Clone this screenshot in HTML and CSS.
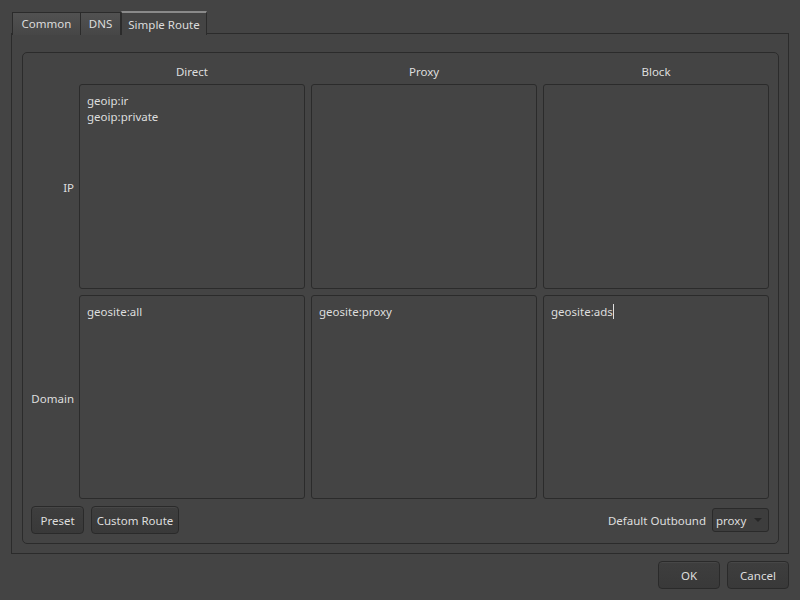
FILE: index.html
```html
<!DOCTYPE html>
<html>
<head>
<meta charset="utf-8">
<link rel="stylesheet" href="styles.css">
</head>
<body>
<div class="dialog">
  <div class="tabbar">
    <div class="tab tab-common">Common</div>
    <div class="tab tab-dns">DNS</div>
    <div class="tab active tab-route">Simple Route</div>
  </div>
  <div class="pane">
    <div class="group">
      <div class="grid">
        <div></div>
        <div class="head">Direct</div>
        <div class="head">Proxy</div>
        <div class="head">Block</div>

        <div class="rowlabel">IP</div>
        <div class="edit">geoip:ir<br>geoip:private</div>
        <div class="edit"></div>
        <div class="edit"></div>

        <div class="rowlabel">Domain</div>
        <div class="edit">geosite:all</div>
        <div class="edit">geosite:proxy</div>
        <div class="edit">geosite:ads<span class="caret"></span></div>

        <div class="actions">
          <button class="btn btn-preset">Preset</button>
          <button class="btn btn-custom">Custom Route</button>
          <div class="spacer"></div>
          <span class="outlabel">Default Outbound</span>
          <div class="combo"><span>proxy</span><span class="arrow"></span></div>
        </div>
      </div>
    </div>
  </div>
  <div class="footer">
    <button class="btn dlg">OK</button>
    <button class="btn dlg">Cancel</button>
  </div>
</div>
</body>
</html>
```

FILE: styles.css
```css
html, body {
  margin: 0;
  padding: 0;
  background: #444444;
  width: 800px;
  height: 600px;
  overflow: hidden;
}
body {
  font-family: "Noto Sans", "DejaVu Sans", sans-serif;
  font-size: 11.5px;
  color: #dedede;
}
.dialog {
  padding: 11px 11px 0 11px;
  display: flex;
  flex-direction: column;
}
.tabbar {
  display: flex;
  padding-left: 1px;
  height: 23px;
  position: relative;
  z-index: 1;
}
.tab {
  box-sizing: border-box;
  height: 23px;
  margin-top: 1px;
  line-height: 21px;
  text-align: center;
  border: 1px solid #2b2b2b;
  border-bottom: none;
  background: linear-gradient(#515151, #464646);
  color: #dcdcdc;
  margin-right: -1px;
}
.tab-common { width: 69px; }
.tab-dns { width: 41px; }
.tab-route { width: 86px; }
.active {
  margin-top: 0;
  height: 24px;
  line-height: 24px;
  background: #444444;
  border-top: 2px solid #8a8a8a;
  margin-left: 1px;
}
.pane {
  box-sizing: border-box;
  height: 521px;
  border: 1px solid #2b2b2b;
  margin-top: -1px;
  padding: 18px 9px 9px 10px;
}
.group {
  box-sizing: border-box;
  height: 492px;
  border: 1px solid #2b2b2b;
  border-radius: 5px;
  padding: 11px 9px 9px 8px;
}
.grid {
  display: grid;
  grid-template-columns: 42px 1fr 1fr 1fr;
  grid-template-rows: 14px 205px 204px 29px;
  column-gap: 6px;
  row-gap: 6px;
}
.head {
  text-align: center;
  line-height: 14px;
  position: relative;
  top: 1px;
}
.rowlabel {
  align-self: center;
  text-align: right;
  margin-right: -1px;
  padding-top: 2px;
}
.edit {
  box-sizing: border-box;
  border: 1px solid #2b2b2b;
  border-radius: 3px;
  background: #444444;
  padding: 8px 7px;
  line-height: 16px;
}
.caret {
  display: inline-block;
  width: 1px;
  height: 15px;
  background: #dedede;
  vertical-align: -3px;
}
.actions {
  grid-column: 1 / -1;
  display: flex;
  align-items: center;
  gap: 7px;
  padding-top: 1px;
}
.spacer { flex: 1; }
.btn {
  font-family: inherit;
  font-size: 11.5px;
  color: #dedede;
  box-sizing: border-box;
  height: 28px;
  border: 1px solid #2a2a2a;
  border-radius: 4px;
  background: linear-gradient(#3e3e3e, #393939);
  box-shadow: inset 0 1px 0 #474747;
  padding: 0;
}
.btn-preset { width: 53px; }
.btn-custom { width: 88px; }
.outlabel { margin-right: -1px; }
.combo {
  box-sizing: border-box;
  width: 57px;
  height: 24px;
  border: 1px solid #2a2a2a;
  border-radius: 3px;
  background: #3d3d3d;
  display: flex;
  align-items: center;
  justify-content: space-between;
  padding: 0 6px 0 3px;
}
.arrow {
  width: 0;
  height: 0;
  border-left: 4px solid transparent;
  border-right: 4px solid transparent;
  border-top: 4px solid #262626;
}
.footer {
  display: flex;
  justify-content: flex-end;
  gap: 7px;
  padding-top: 7px;
}
.dlg {
  width: 62px;
}
```
